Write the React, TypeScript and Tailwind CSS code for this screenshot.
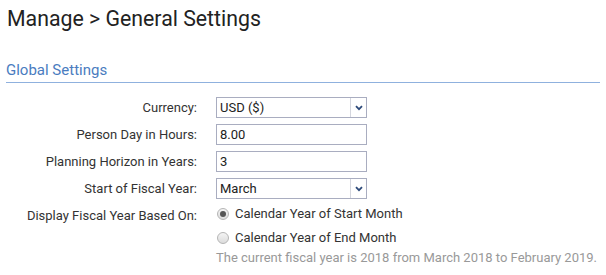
import React, { useState } from 'react';

const SelectBox: React.FC<{ value: string }> = ({ value }) => {
  return (
    <div className="flex h-[21px] w-[151px] items-stretch border border-[#a9adc0] bg-white">
      <div className="flex flex-1 items-center pl-[3px] text-[13px] text-[#222]">{value}</div>
      <div className="flex w-[16px] items-center justify-center border-l border-[#d4d6de]">
        <svg width="8" height="6" viewBox="0 0 8 6">
          <path d="M1 1.2 L4 4.2 L7 1.2" fill="none" stroke="#2d4a7a" strokeWidth="1.8" />
        </svg>
      </div>
    </div>
  );
};

const TextBox: React.FC<{ value: string }> = ({ value }) => {
  return (
    <div className="flex h-[21px] w-[151px] items-center border border-[#a9adc0] bg-white pl-[3px] text-[13px] text-[#222]">
      {value}
    </div>
  );
};

const Radio: React.FC<{ checked: boolean; label: string; onClick: () => void }> = ({ checked, label, onClick }) => {
  return (
    <div className="flex h-[24px] cursor-pointer items-center" onClick={onClick}>
      <span className="ml-[1px] flex h-[12px] w-[12px] items-center justify-center rounded-full border border-[#b5b5b5] bg-gradient-to-b from-[#f4f4f4] to-[#dcdcdc]">
        {checked && <span className="h-[6px] w-[6px] rounded-full bg-[#555]" />}
      </span>
      <span className="ml-[6px] text-[13px] text-[#333]">{label}</span>
    </div>
  );
};

const Row: React.FC<{ label: string; children: React.ReactNode }> = ({ label, children }) => (
  <div className="flex h-[27px] items-center">
    <div className="w-[191px] text-right text-[13px] text-[#333]">{label}</div>
    <div className="ml-[19px]">{children}</div>
  </div>
);

const App: React.FC = () => {
  const [basedOn, setBasedOn] = useState('start');

  return (
    <div className="h-[275px] overflow-hidden bg-white px-[6px] font-['Roboto',sans-serif]">
      <h1 className="pt-[7px] pl-[1px] text-[21.3px] leading-[24px] text-[#222]">Manage &gt; General Settings</h1>
      <div className="mt-[31px] border-b border-[#8fb1de] pb-[3px] text-[15px] leading-[17px] text-[#4a7cc0]">
        Global Settings
      </div>
      <div className="mt-[11px]">
        <Row label="Currency:">
          <SelectBox value="USD ($)" />
        </Row>
        <Row label="Person Day in Hours:">
          <TextBox value="8.00" />
        </Row>
        <Row label="Planning Horizon in Years:">
          <TextBox value="3" />
        </Row>
        <Row label="Start of Fiscal Year:">
          <SelectBox value="March" />
        </Row>
        <div className="flex">
          <div className="w-[191px] pt-[4px] text-right text-[13px] text-[#333]">Display Fiscal Year Based On:</div>
          <div className="ml-[19px]">
            <Radio checked={basedOn === 'start'} label="Calendar Year of Start Month" onClick={() => setBasedOn('start')} />
            <Radio checked={basedOn === 'end'} label="Calendar Year of End Month" onClick={() => setBasedOn('end')} />
            <div className="whitespace-nowrap text-[13px] leading-[16px] text-[#999]">
              The current fiscal year is 2018 from March 2018 to February 2019.
            </div>
          </div>
        </div>
      </div>
    </div>
  );
};

export default App;
